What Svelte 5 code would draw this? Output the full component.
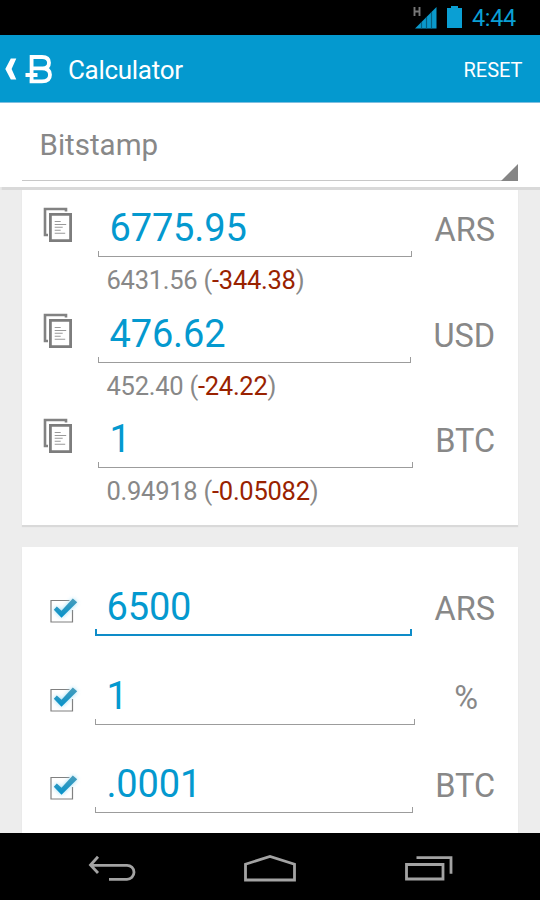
<script>
  let exchange = $state('Bitstamp');

  let amounts = $state([
    { value: '6775.95', net: '6431.56', diff: '-344.38', unit: 'ARS' },
    { value: '476.62', net: '452.40', diff: '-24.22', unit: 'USD' },
    { value: '1', net: '0.94918', diff: '-0.05082', unit: 'BTC' }
  ]);

  let fees = $state([
    { value: '6500', unit: 'ARS', active: true },
    { value: '1', unit: '%', active: false },
    { value: '.0001', unit: 'BTC', active: false }
  ]);
</script>

<div class="screen">
  <div class="status-bar">
    <svg class="signal" width="24" height="24" viewBox="0 0 24 24">
      <path d="M1.5 1v9M6.500 1v9M1.5 5.500h5" stroke="#777" stroke-width="1.9" fill="none" />
      <path d="M2 22.500L23.500 1v21.500z" fill="#0a99cb" />
      <path d="M8.500 16v6.500M13.500 11v11.500M18.500 6v16.500" stroke="#045f80" stroke-width="1.2" />
    </svg>
    <svg class="battery" width="15" height="23" viewBox="0 0 15 23">
      <path d="M0 2h4V0h7v2h4v20H0z" fill="#0a9fd4" />
    </svg>
    <span class="clock">4:44</span>
  </div>

  <header class="action-bar">
    <svg class="logo" width="54" height="40" viewBox="0 0 54 40">
      <path d="M10.800 9.500h5.500L11.600 20l4.700 10.500h-5.500L5.300 20z" fill="#fff" />
      <path
        d="M31.600 33V8H42c4.800 0 7 2.200 7 5.700s-2.300 5.700-6.300 5.700H31.600M42 19.400c5.300 0 8 2.400 8 6.400 0 4.200-2.900 6.600-8 6.600H29.600M25.500 26h12"
        fill="none"
        stroke="#fff"
        stroke-width="3.800"
      />
    </svg>
    <h1>Calculator</h1>
    <button class="reset">RESET</button>
  </header>

  <section class="exchange">
    <div class="spinner">
      <span>{exchange}</span>
    </div>
  </section>

  <main>
    <section class="card results">
      {#each amounts as row}
        <div class="row">
          <svg class="copy" width="30" height="36" viewBox="0 0 30 36">
            <path d="M23 4.500V2H2v26h3" fill="none" stroke="#828282" stroke-width="2.600" />
            <path d="M7.400 7.400h20.200v26.200H7.400z" fill="#fff" stroke="#7d7d7d" stroke-width="2.800" />
            <path
              d="M11.700 14.500h6M11.700 17.500h11.500M11.700 20.300h8M11.700 23.200h6M11.700 26.200h10.500"
              stroke="#999"
              stroke-width="1.100"
            />
          </svg>
          <div class="field">
            <input type="text" bind:value={row.value} />
          </div>
          <span class="unit">{row.unit}</span>
          <p class="net">{row.net} (<span class="loss">{row.diff}</span>)</p>
        </div>
      {/each}
    </section>

    <section class="card fees">
      {#each fees as row}
        <div class="row">
          <svg class="check" width="36" height="36" viewBox="0 0 36 36">
            <defs>
              <linearGradient id="tick" x1="0" y1="0" x2="0" y2="1">
                <stop offset="0" stop-color="#4a9dbb" />
                <stop offset="1" stop-color="#0492cb" />
              </linearGradient>
            </defs>
            <path d="M23.500 7.500H5v21.500H26.500V17" fill="none" stroke="#808080" stroke-width="1.200" />
            <path class="glow" d="M7.800 16.700l3-3.300 4.700 4.300L26.800 5.500l4.400 3.800L15.500 24.700z" />
            <path d="M7.800 16.700l3-3.300 4.700 4.300L26.800 5.500l4.400 3.800L15.500 24.700z" fill="url(#tick)" />
          </svg>
          <div class="field" class:active={row.active}>
            <input type="text" bind:value={row.value} />
          </div>
          <span class="unit">{row.unit}</span>
        </div>
      {/each}
    </section>
  </main>

  <nav class="nav-bar">
    <svg width="50" height="30" viewBox="0 0 50 30">
      <path d="M12 1.800L4.500 10l7.500 8M4.500 10.300H41a7 7 0 0 1 0 14H23" />
    </svg>
    <svg width="54" height="30" viewBox="0 0 54 30">
      <path d="M2.500 25V9.200L27 1.500l24.500 7.700V25z" />
    </svg>
    <svg width="50" height="30" viewBox="0 0 50 30">
      <path d="M2.500 9.500h36.500v14.500H2.500zM12.500 2.700h34.500v16" />
    </svg>
  </nav>
</div>

<style>
  :global(body) {
    margin: 0;
  }

  .screen {
    display: flex;
    flex-direction: column;
    width: 540px;
    height: 900px;
    overflow: hidden;
    background: #ededed;
    color: #888;
    font-family: Roboto, 'Noto Sans', sans-serif;
  }

  .status-bar {
    display: flex;
    flex: none;
    justify-content: flex-end;
    height: 35px;
    padding-right: 24px;
    background: #000;
  }

  .signal {
    margin: 6px 10px 0 0;
  }

  .battery {
    margin: 6px 10px 0 0;
  }

  .clock {
    color: #0a9fd4;
    font-size: 23.5px;
    letter-spacing: -0.3px;
    line-height: 36px;
  }

  .action-bar {
    display: flex;
    flex: none;
    align-items: center;
    box-sizing: border-box;
    height: 68px;
    padding-right: 17.5px;
    border-bottom: 1px solid #7fbfe0;
    background: #0499cf;
    color: #fff;
  }

  .logo {
    margin-right: 14px;
  }

  h1 {
    flex: 1;
    margin: 2px 0 0;
    font-size: 26px;
    font-weight: 400;
    letter-spacing: -0.3px;
  }

  .reset {
    margin-top: 2px;
    padding: 0;
    border: 0;
    background: none;
    color: #fff;
    font: inherit;
    font-size: 20px;
  }

  .exchange {
    position: relative;
    z-index: 1;
    flex: none;
    height: 84px;
    padding: 0 22px;
    background: #fff;
    box-shadow: 0 2px 1px 0.5px #d9d9d9;
  }

  .spinner {
    position: relative;
    box-sizing: border-box;
    height: 78px;
    padding-left: 17.5px;
    border-bottom: 1px solid #c8c8c8;
    font-size: 29.5px;
    line-height: 85px;
  }

  .spinner::after {
    content: '';
    position: absolute;
    right: 0;
    bottom: -1px;
    border-bottom: 17px solid #858585;
    border-left: 17px solid transparent;
  }

  main {
    flex: 1;
    min-height: 0;
    overflow: hidden;
    padding: 0 22.4px;
  }

  .card {
    background: #fff;
    box-shadow: 0 2px 1px #d9d9d9;
  }

  .row {
    display: grid;
    align-content: start;
  }

  .results {
    box-sizing: border-box;
    height: 338px;
    margin-bottom: 22px;
    padding: 17px 22.5px 0 20px;
  }

  .results .row {
    grid-template-columns: 55.6px 1fr auto;
    height: 105.5px;
  }

  .fees {
    box-sizing: border-box;
    height: 300px;
    padding: 36px 22.5px 0 24px;
  }

  .fees .row {
    grid-template-columns: 48.6px 1fr auto;
    height: 88.5px;
  }

  .copy {
    margin: 3px 0 0 1px;
  }

  .check {
    margin-top: 10px;
  }

  .glow {
    fill: #9bdcf5;
    filter: blur(2px);
  }

  .field {
    position: relative;
    height: 53px;
    padding-left: 11.5px;
  }

  .field::after {
    content: '';
    position: absolute;
    left: 0;
    right: 0;
    bottom: 0;
    height: 5px;
    border: 1px solid #9c9c9c;
    border-top: 0;
    pointer-events: none;
  }

  .field.active::after {
    border-width: 0 2px 2px;
    border-color: #0e8cc8;
  }

  input {
    display: block;
    box-sizing: border-box;
    width: 100%;
    height: 48px;
    padding: 0;
    border: 0;
    outline: 0;
    background: none;
    color: #0499cf;
    font: inherit;
    font-size: 38px;
    letter-spacing: -0.15px;
  }

  .unit {
    min-width: 58px;
    padding-left: 22.5px;
    font-size: 32.5px;
    line-height: 53px;
    text-align: center;
  }

  .net {
    grid-column: 2 / 4;
    margin: 0 0 0 8.5px;
    font-size: 25.5px;
    letter-spacing: -0.25px;
    line-height: 47px;
  }

  .loss {
    color: #992200;
  }

  .nav-bar {
    display: flex;
    flex: none;
    justify-content: space-between;
    box-sizing: border-box;
    height: 67px;
    padding: 22px 86px 0 86px;
    background: #000;
  }

  .nav-bar path {
    fill: none;
    stroke: #a3a3a3;
    stroke-width: 2.8;
  }
</style>
